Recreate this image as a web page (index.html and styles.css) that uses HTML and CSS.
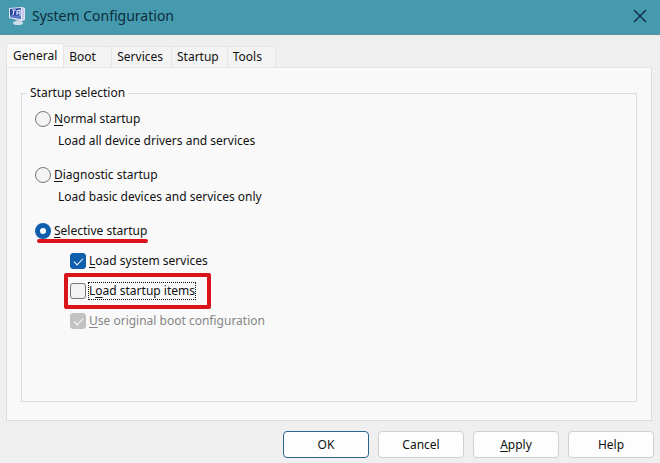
FILE: index.html
```html
<!DOCTYPE html>
<html lang="en">
<head>
  <meta charset="UTF-8" />
  <meta name="viewport" content="width=device-width, initial-scale=1.0" />
  <title>System Configuration</title>
  <link rel="stylesheet" href="styles.css">
</head>
<body>
  <header class="titlebar">
    <svg class="app-icon" width="18" height="20" viewBox="0 0 18 20" aria-hidden="true">
      <path d="M8 14h5l1 3H7z" fill="#aebfd2" />
      <ellipse cx="10" cy="17" rx="5" ry="2" fill="#cfe0ea" />
      <path d="M1 2l13-1 3 1v12l-3 1-13-3z" fill="#dfe3f6" />
      <path d="M2 3l11-1v11L2 11z" fill="#27439f" />
      <path d="M2 9l11 1v3L2 11z" fill="#5a78c8" />
      <path d="M4 4h4M6 4L5 9M9 9V5l3-1v6M9 7h3" stroke="#e4ebff" stroke-width="1.2" fill="none" />
      <path d="M14 2l2 1v10l-2 1z" fill="#c9c6ea" />
    </svg>
    <h1>System Configuration</h1>
    <button class="close" aria-label="Close">
      <svg width="14" height="14" viewBox="0 0 14 14"><path d="M1 1l12 12M13 1L1 13" stroke="#14304f" stroke-width="1.5" fill="none" /></svg>
    </button>
  </header>

  <main>
    <div class="tabs" role="tablist">
      <button class="tab active" role="tab" aria-selected="true">General</button>
      <button class="tab" role="tab">Boot</button>
      <button class="tab" role="tab">Services</button>
      <button class="tab" role="tab">Startup</button>
      <button class="tab" role="tab">Tools</button>
    </div>

    <section class="panel">
      <fieldset>
        <legend>Startup selection</legend>

        <div class="option">
          <label><input type="radio" name="startup"><span><u>N</u>ormal startup</span></label>
          <p>Load all device drivers and services</p>
        </div>
        <div class="option">
          <label><input type="radio" name="startup"><span><u>D</u>iagnostic startup</span></label>
          <p>Load basic devices and services only</p>
        </div>
        <div class="option">
          <label class="underlined"><input type="radio" name="startup" checked><span><u>S</u>elective startup</span></label>
          <div class="checks">
            <label><input type="checkbox" checked><span><u>L</u>oad system services</span></label>
            <label class="boxed"><input type="checkbox"><span class="focused">L<u>o</u>ad startup items</span></label>
            <label class="disabled"><input type="checkbox" checked disabled><span><u>U</u>se original boot configuration</span></label>
          </div>
        </div>
      </fieldset>
    </section>
  </main>

  <footer class="actions">
    <button class="default">OK</button>
    <button>Cancel</button>
    <button><u>A</u>pply</button>
    <button>Help</button>
  </footer>
</body>
</html>
```
FILE: styles.css
```css
:root {
  --title-bg: #459bad;
  --window-bg: #efefef;
  --panel-bg: #f9f9f9;
  --line: #dcdcdc;
  --accent: #0f5fae;
  --mark: #d9151b;
}

* {
  box-sizing: border-box;
}

body {
  margin: 0;
  min-height: 100vh;
  display: flex;
  flex-direction: column;
  background: var(--window-bg);
  color: #111;
  font: 12px/16px "Noto Sans", sans-serif;
}

button {
  font: inherit;
  color: inherit;
}

u {
  text-underline-offset: 2px;
}

.titlebar {
  display: flex;
  align-items: center;
  height: 35px;
  padding: 0 12px 2px 8px;
  background: var(--title-bg);
  border-bottom: 1px solid #5b8f9c;
}

.titlebar h1 {
  flex: 1;
  margin: 0 0 0 6px;
  font: 14px/20px "Noto Sans", sans-serif;
  color: #0c2c3c;
}

.close {
  display: flex;
  padding: 1px;
  border: none;
  background: none;
}

main {
  flex: 1;
  display: flex;
  flex-direction: column;
  padding: 8px 8px 0 6px;
}

.tabs {
  display: flex;
  align-items: flex-end;
}

.tab {
  height: 21px;
  min-width: 48px;
  padding: 0 8px 0 5px;
  border: 1px solid #e6e6e6;
  border-width: 1px 1px 0 0;
  background: #f3f3f3;
  text-align: left;
}

.tab.active {
  height: 25px;
  margin-bottom: -1px;
  padding: 0 6px;
  border-left-width: 1px;
  background: var(--panel-bg);
}

.panel {
  flex: 1;
  display: flex;
  padding: 17px 14px 18px;
  border: 1px solid var(--line);
  border-top-color: #e6e6e6;
  background: var(--panel-bg);
}

fieldset {
  flex: 1;
  min-width: 0;
  margin: 0;
  padding: 8px 13px;
  border: 1px solid var(--line);
}

legend {
  margin-left: -8px;
  padding: 0 3px;
}

label {
  display: flex;
  align-items: center;
  gap: 3px;
  width: fit-content;
  height: 20px;
}

.option {
  height: 56px;
}

.option p {
  margin: 4px 0 0 23px;
}

input {
  appearance: none;
  flex: none;
  width: 16px;
  height: 16px;
  margin: 0;
  border: 1px solid #777;
  background: #f3f3f3;
}

input[type="radio"] {
  border-radius: 50%;
}

input[type="radio"]:checked {
  border: 5px solid var(--accent);
  background: #fff;
}

input[type="checkbox"] {
  border-radius: 3px;
}

input[type="checkbox"]:checked {
  display: grid;
  place-items: center;
  border-color: var(--accent);
  background: var(--accent);
}

input[type="checkbox"]:checked::before {
  content: "";
  width: 8px;
  height: 4px;
  margin-bottom: 2px;
  border: solid #fff;
  border-width: 0 0 1px 1px;
  transform: rotate(-45deg);
}

input[type="checkbox"]:disabled:checked {
  border-color: #c2c2c2;
  background: #c2c2c2;
}

.disabled {
  color: #858585;
}

.checks {
  display: flex;
  flex-direction: column;
  gap: 10px;
  padding: 10px 0 0 35px;
}

.focused {
  outline: 1px dotted #111;
}

/* red marker strokes over the form */
.underlined,
.boxed {
  position: relative;
}

.underlined::after {
  content: "";
  position: absolute;
  left: 2px;
  right: -1px;
  bottom: -2px;
  height: 4px;
  border-radius: 2px;
  background: var(--mark);
}

.boxed::after {
  content: "";
  position: absolute;
  inset: -8px -16px -8px -6px;
  border: 4px solid var(--mark);
  border-radius: 2px;
}

.actions {
  display: flex;
  justify-content: flex-end;
  gap: 9px;
  padding: 10px 6px 5px;
}

.actions button {
  width: 86px;
  height: 27px;
  padding: 0;
  border: 1px solid #cfcfcf;
  border-radius: 4px;
  background: #fdfdfd;
}

.actions .default {
  border-color: #2a6590;
}
```
